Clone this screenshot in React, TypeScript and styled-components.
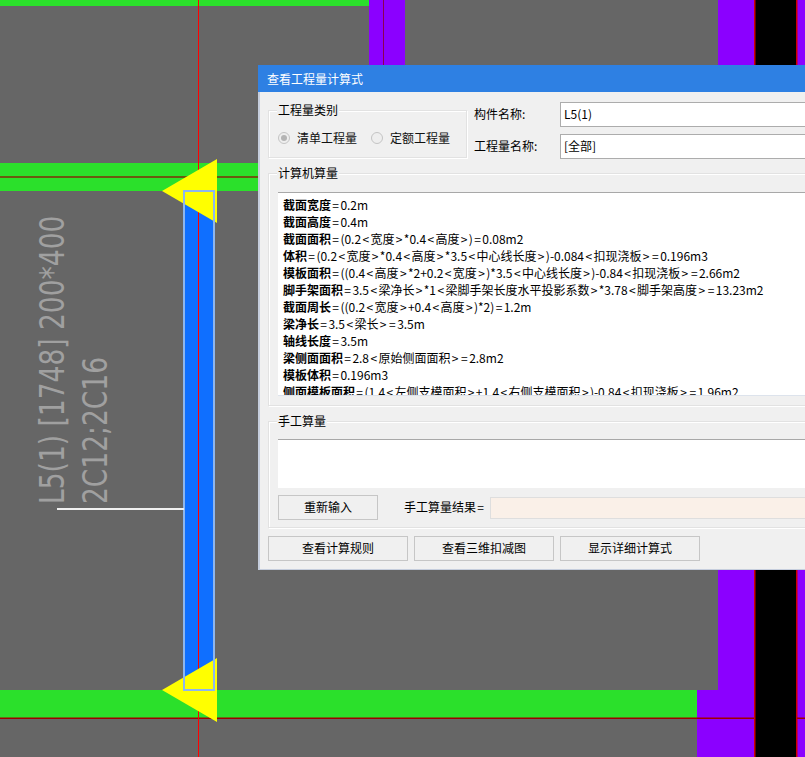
import React from "react";
import styled, { createGlobalStyle } from "styled-components";

const GlobalStyle = createGlobalStyle`
  html, body {
    margin: 0;
    padding: 0;
    background: #666666;
  }
`;

const Canvas = styled.div`
  position: relative;
  width: 805px;
  height: 757px;
  overflow: hidden;
  background: #666666;
`;

const Drawing = styled.svg`
  display: block;
`;

const DrawingLabel = styled.text`
  font-family: "DejaVu Sans", sans-serif;
  font-size: 33px;
  fill: #a0a0a0;
`;

const Dialog = styled.div`
  position: absolute;
  left: 258px;
  top: 65px;
  width: 640px;
  height: 505px;
  box-sizing: border-box;
  display: flex;
  flex-direction: column;
  background: #f0f0f0;
  border-left: 2px solid #c6cedd;
  border-bottom: 1px solid #c6cedd;
  font-family: "Noto Sans CJK SC", sans-serif;
  font-size: 12px;
  color: #000;
`;

const TitleBar = styled.div`
  height: 27px;
  margin-left: -2px;
  padding-left: 9px;
  flex: none;
  display: flex;
  align-items: center;
  background: #2e80e3;
  color: #fff;
`;

const Body = styled.div`
  flex: 1;
  display: flex;
  flex-direction: column;
  gap: 7px;
  padding: 10px 0 0 8px;
`;

const TopRow = styled.div`
  display: flex;
  height: 56px;
`;

const Group = styled.fieldset<{ $width?: number }>`
  margin: 0;
  padding: 0 0 0 9px;
  min-width: 0;
  box-sizing: border-box;
  width: ${(p) => (p.$width ? `${p.$width}px` : "100%")};
  border: 1px solid #e2e2e2;
  box-shadow: 1px 1px 0 #fff, inset 1px 1px 0 #fff;
`;

const GroupTitle = styled.legend`
  margin-left: -1px;
  padding: 0 1px;
  height: 17px;
  line-height: 15px;
  background: #f0f0f0;
`;

const RadioRow = styled.div`
  display: flex;
  align-items: center;
  height: 17px;
  margin-top: 10px;
`;

const RadioOption = styled.label`
  display: flex;
  align-items: center;
  gap: 7px;
  margin-right: 14px;
  color: #111;
`;

const RadioMark = styled.span<{ $checked?: boolean }>`
  position: relative;
  display: block;
  width: 12px;
  height: 12px;
  box-sizing: border-box;
  border-radius: 50%;
  border: 1px solid #c4c4c4;
  background: #eeeeee;

  &::after {
    content: "";
    display: ${(p) => (p.$checked ? "block" : "none")};
    position: absolute;
    left: 2px;
    top: 2px;
    width: 6px;
    height: 6px;
    border-radius: 50%;
    background: #b4b4b4;
  }
`;

const NameFields = styled.div`
  display: grid;
  grid-template-columns: 86px 1fr;
  grid-auto-rows: 25px;
  row-gap: 7px;
  flex: 1;
  margin-left: 7px;
  align-items: center;
`;

const FieldLabel = styled.span`
  line-height: 23px;
  height: 25px;
`;

const ReadonlyField = styled.div`
  height: 25px;
  box-sizing: border-box;
  padding-left: 3px;
  line-height: 21px;
  background: #fff;
  border: 1px solid #acacac;
`;

const FormulaBox = styled.div`
  height: 204px;
  margin-top: 10px;
  margin-bottom: 9px;
  padding: 3px 0 0 5px;
  box-sizing: border-box;
  overflow: hidden;
  background: #fff;
  border-top: 1px solid #a8a8a8;
  border-bottom: 1px solid #dde3ec;
  line-height: 17px;
  white-space: nowrap;
`;

const FormulaLine = styled.div`
  height: 17px;
`;

const FormulaName = styled.b`
  font-weight: 700;
`;

const Sym = styled.span`
  padding: 0 1.35px;
`;

const ManualInput = styled.div`
  height: 49px;
  margin-top: 9px;
  background: #fff;
  border-top: 1px solid #a8a8a8;
  box-sizing: border-box;
`;

const ManualRow = styled.div`
  display: flex;
  align-items: center;
  height: 25px;
  margin: 7px 0;
`;

const Button = styled.button<{ $width: number }>`
  width: ${(p) => p.$width}px;
  height: 25px;
  flex: none;
  padding: 0 0 2px;
  box-sizing: border-box;
  background: #f0f0f0;
  border: 1px solid #c6c6c6;
  font: inherit;
  color: #000;
`;

const ResultLabel = styled.span`
  margin-left: 26px;
  padding-bottom: 2px;
`;

const ResultField = styled.div`
  flex: 1;
  height: 22px;
  margin-left: 5px;
  box-sizing: border-box;
  background: #faf0e8;
  border: 1px solid #dedede;
`;

const ButtonRow = styled.div`
  display: flex;
  gap: 6px;
  margin-top: 1px;
`;

const FORMULAS: [string, string][] = [
  ["截面宽度", "=0.2m"],
  ["截面高度", "=0.4m"],
  ["截面面积", "=(0.2<宽度>*0.4<高度>)=0.08m2"],
  ["体积", "=(0.2<宽度>*0.4<高度>*3.5<中心线长度>)-0.084<扣现浇板>=0.196m3"],
  ["模板面积", "=((0.4<高度>*2+0.2<宽度>)*3.5<中心线长度>)-0.84<扣现浇板>=2.66m2"],
  ["脚手架面积", "=3.5<梁净长>*1<梁脚手架长度水平投影系数>*3.78<脚手架高度>=13.23m2"],
  ["截面周长", "=((0.2<宽度>+0.4<高度>)*2)=1.2m"],
  ["梁净长", "=3.5<梁长>=3.5m"],
  ["轴线长度", "=3.5m"],
  ["梁侧面面积", "=2.8<原始侧面面积>=2.8m2"],
  ["模板体积", "=0.196m3"],
  ["侧面模板面积", "=(1.4<左侧支模面积>+1.4<右侧支模面积>)-0.84<扣现浇板>=1.96m2"],
];

// the dialog font draws < > = wider than Noto does
const spaceSymbols = (text: string) =>
  text
    .split(/([<>=])/)
    .map((part, i) => (i % 2 === 1 ? <Sym key={i}>{part}</Sym> : part));

const CadDrawing = () => (
  <Drawing width="805" height="757" viewBox="0 0 805 757">
    <rect x="0" y="0" width="369" height="6" fill="#2be02b" />
    <rect x="0" y="163" width="400" height="28" fill="#2be02b" />
    <rect x="0" y="176" width="400" height="2" fill="#6a5a10" />
    <rect x="369" y="0" width="36" height="70" fill="#8b00ff" />
    <rect x="383" y="0" width="1" height="70" fill="#8a0050" />
    <rect x="718" y="0" width="87" height="757" fill="#8b00ff" />
    <rect x="697" y="690" width="21" height="67" fill="#8b00ff" />
    <rect x="0" y="690" width="697" height="28" fill="#2be02b" />
    <rect x="755" y="0" width="41" height="757" fill="#000" />
    <rect x="754" y="0" width="1.5" height="757" fill="#d00000" />
    <rect x="796" y="0" width="1.5" height="757" fill="#d00000" />
    <rect x="0" y="717.5" width="754" height="1.5" fill="#a00000" />
    <rect x="797" y="717.5" width="8" height="1.5" fill="#a00000" />
    <rect x="184" y="191" width="30" height="499" fill="#0f6fff" />
    <rect x="198" y="0" width="1" height="757" fill="#ff0000" />
    <polygon points="162,191 217,159 217,223" fill="#ffff00" />
    <polygon points="162,690 217,658 217,722" fill="#ffff00" />
    <rect x="184" y="191" width="30" height="499" fill="none" stroke="#8db6ee" strokeWidth="2" />
    <rect x="57" y="508" width="127" height="2" fill="#f0f0f0" />
    <g transform="translate(64 504) rotate(-90) scale(0.803 1)">
      <DrawingLabel>L5(1) [1748] 200*400</DrawingLabel>
    </g>
    <g transform="translate(107 504) rotate(-90) scale(0.803 1)">
      <DrawingLabel>2C12;2C16</DrawingLabel>
    </g>
  </Drawing>
);

const App: React.FC = () => (
  <Canvas>
    <GlobalStyle />
    <CadDrawing />
    <Dialog>
      <TitleBar>查看工程量计算式</TitleBar>
      <Body>
        <TopRow>
          <Group $width={199}>
            <GroupTitle>工程量类别</GroupTitle>
            <RadioRow>
              <RadioOption>
                <RadioMark $checked />
                清单工程量
              </RadioOption>
              <RadioOption>
                <RadioMark />
                定额工程量
              </RadioOption>
            </RadioRow>
          </Group>
          <NameFields>
            <FieldLabel>构件名称:</FieldLabel>
            <ReadonlyField>L5(1)</ReadonlyField>
            <FieldLabel>工程量名称:</FieldLabel>
            <ReadonlyField>[全部]</ReadonlyField>
          </NameFields>
        </TopRow>
        <Group>
          <GroupTitle>计算机算量</GroupTitle>
          <FormulaBox>
            {FORMULAS.map(([name, expr]) => (
              <FormulaLine key={name}>
                <FormulaName>{name}</FormulaName>
                {spaceSymbols(expr)}
              </FormulaLine>
            ))}
          </FormulaBox>
        </Group>
        <Group>
          <GroupTitle>手工算量</GroupTitle>
          <ManualInput />
          <ManualRow>
            <Button $width={100}>重新输入</Button>
            <ResultLabel>手工算量结果{spaceSymbols("=")}</ResultLabel>
            <ResultField />
          </ManualRow>
        </Group>
        <ButtonRow>
          <Button $width={140}>查看计算规则</Button>
          <Button $width={140}>查看三维扣减图</Button>
          <Button $width={140}>显示详细计算式</Button>
        </ButtonRow>
      </Body>
    </Dialog>
  </Canvas>
);

export default App;
